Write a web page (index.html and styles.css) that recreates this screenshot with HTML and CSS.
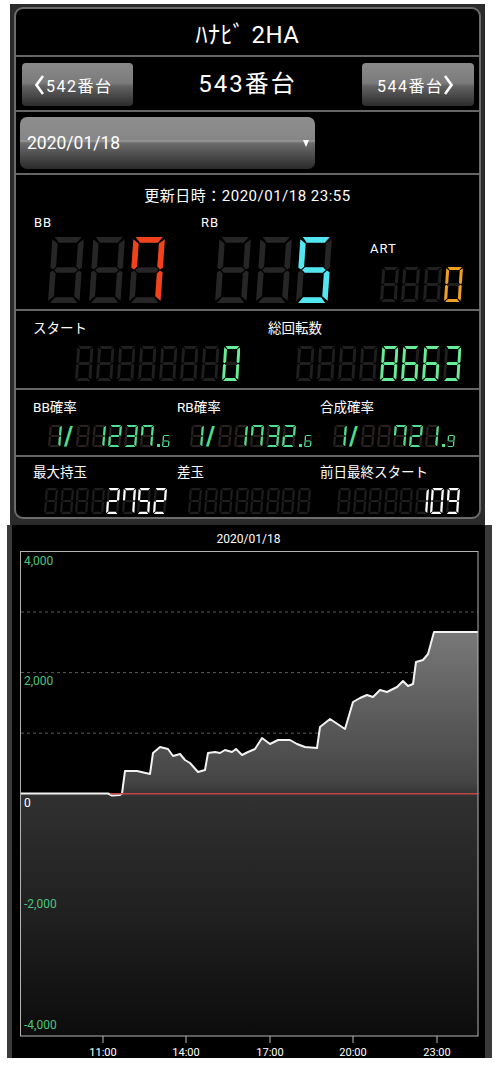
FILE: index.html
```html
<!DOCTYPE html>
<html lang="ja">
<head>
<meta charset="utf-8">
<title>ﾊﾅﾋﾞ 2HA 543番台</title>
<link rel="stylesheet" href="styles.css">
</head>
<body>
<svg class="defs" aria-hidden="true">
  <defs>
    <polygon id="sa" points="2,0 26,0 22,5 6,5"/>
    <polygon id="sb" points="28,2 28,27 25.5,28.5 23,26 23,6"/>
    <polygon id="sc" points="28,31 28,56 23,52 23,32 25.5,29.5"/>
    <polygon id="sd" points="6,53 22,53 26,58 2,58"/>
    <polygon id="se" points="0,31 2.5,29.5 5,32 5,52 0,56"/>
    <polygon id="sf" points="0,2 5,6 5,26 2.5,28.5 0,27"/>
    <polygon id="sg" points="3.5,29 6,26.5 22,26.5 24.5,29 22,31.5 6,31.5"/>
  </defs>
  <symbol id="d8" viewBox="0 0 32 58" preserveAspectRatio="none"><g transform="translate(4 0) skewX(-4)"><use href="#sa"/><use href="#sb"/><use href="#sc"/><use href="#sd"/><use href="#se"/><use href="#sf"/><use href="#sg"/></g></symbol>
  <symbol id="n0" viewBox="0 0 32 58" preserveAspectRatio="none"><g transform="translate(4 0) skewX(-4)"><use href="#sa"/><use href="#sb"/><use href="#sc"/><use href="#sd"/><use href="#se"/><use href="#sf"/></g></symbol>
  <symbol id="n1" viewBox="0 0 32 58" preserveAspectRatio="none"><g transform="translate(4 0) skewX(-4)"><use href="#sb"/><use href="#sc"/></g></symbol>
  <symbol id="n2" viewBox="0 0 32 58" preserveAspectRatio="none"><g transform="translate(4 0) skewX(-4)"><use href="#sa"/><use href="#sb"/><use href="#sd"/><use href="#se"/><use href="#sg"/></g></symbol>
  <symbol id="n3" viewBox="0 0 32 58" preserveAspectRatio="none"><g transform="translate(4 0) skewX(-4)"><use href="#sa"/><use href="#sb"/><use href="#sc"/><use href="#sd"/><use href="#sg"/></g></symbol>
  <symbol id="n5" viewBox="0 0 32 58" preserveAspectRatio="none"><g transform="translate(4 0) skewX(-4)"><use href="#sa"/><use href="#sc"/><use href="#sd"/><use href="#sf"/><use href="#sg"/></g></symbol>
  <symbol id="n6" viewBox="0 0 32 58" preserveAspectRatio="none"><g transform="translate(4 0) skewX(-4)"><use href="#sa"/><use href="#sc"/><use href="#sd"/><use href="#se"/><use href="#sf"/><use href="#sg"/></g></symbol>
  <symbol id="n7" viewBox="0 0 32 58" preserveAspectRatio="none"><g transform="translate(4 0) skewX(-4)"><use href="#sa"/><use href="#sb"/><use href="#sc"/><use href="#sf"/></g></symbol>
  <symbol id="n9" viewBox="0 0 32 58" preserveAspectRatio="none"><g transform="translate(4 0) skewX(-4)"><use href="#sa"/><use href="#sb"/><use href="#sc"/><use href="#sd"/><use href="#sf"/><use href="#sg"/></g></symbol>
</svg>

<div class="top">
  <div class="panel">
    <div class="title">ﾊﾅﾋﾞ 2HA</div>

    <div class="nav">
      <div class="btn prev">
        <svg class="chev" viewBox="0 0 9 20"><polyline points="8,1 1.5,10 8,19"/></svg>542番台
      </div>
      <div class="cur">543番台</div>
      <div class="btn next">
        544番台<svg class="chev" viewBox="0 0 9 20"><polyline points="1,1 7.5,10 1,19"/></svg>
      </div>
    </div>

    <div class="date">
      <div class="select"><span>2020/01/18</span><span class="caret"></span></div>
    </div>

    <div class="info">
      <div class="updated">更新日時：2020/01/18 23:55</div>
      <div class="bonus">
        <div class="bgrp bb">
          <div class="lbl">BB</div>
          <div class="seg s-big red" role="img" aria-label="7">
            <svg class="dg"><use href="#d8"/></svg><svg class="dg"><use href="#d8"/></svg><svg class="dg"><use href="#d8"/><use href="#n7"/></svg>
          </div>
        </div>
        <div class="bgrp rb">
          <div class="lbl">RB</div>
          <div class="seg s-big cyan" role="img" aria-label="5">
            <svg class="dg"><use href="#d8"/></svg><svg class="dg"><use href="#d8"/></svg><svg class="dg"><use href="#d8"/><use href="#n5"/></svg>
          </div>
        </div>
        <div class="bgrp art">
          <div class="lbl">ART</div>
          <div class="seg s-art orange" role="img" aria-label="0">
            <svg class="dg"><use href="#d8"/></svg><svg class="dg"><use href="#d8"/></svg><svg class="dg"><use href="#d8"/></svg><svg class="dg"><use href="#d8"/><use href="#n0"/></svg>
          </div>
        </div>
      </div>
    </div>

    <div class="start">
      <div class="col">
        <div class="lbl">スタート</div>
        <div class="seg s-mid green" role="img" aria-label="0">
          <svg class="dg"><use href="#d8"/></svg><svg class="dg"><use href="#d8"/></svg><svg class="dg"><use href="#d8"/></svg><svg class="dg"><use href="#d8"/></svg><svg class="dg"><use href="#d8"/></svg><svg class="dg"><use href="#d8"/></svg><svg class="dg"><use href="#d8"/></svg><svg class="dg"><use href="#d8"/><use href="#n0"/></svg>
        </div>
      </div>
      <div class="col">
        <div class="lbl">総回転数</div>
        <div class="seg s-mid green" role="img" aria-label="8663">
          <svg class="dg"><use href="#d8"/></svg><svg class="dg"><use href="#d8"/></svg><svg class="dg"><use href="#d8"/></svg><svg class="dg"><use href="#d8"/></svg><svg class="dg"><use href="#d8"/><use href="#d8"/></svg><svg class="dg"><use href="#d8"/><use href="#n6"/></svg><svg class="dg"><use href="#d8"/><use href="#n6"/></svg><svg class="dg"><use href="#d8"/><use href="#n3"/></svg>
        </div>
      </div>
    </div>

    <div class="prob">
      <div class="col">
        <div class="lbl">BB確率</div>
        <div class="seg s-prob pgreen p1" role="img" aria-label="1/1237.6">
          <svg class="dg"><use href="#d8"/><use href="#n1"/></svg><span class="sl">/</span><svg class="dg"><use href="#d8"/></svg><svg class="dg"><use href="#d8"/><use href="#n1"/></svg><svg class="dg"><use href="#d8"/><use href="#n2"/></svg><svg class="dg"><use href="#d8"/><use href="#n3"/></svg><svg class="dg"><use href="#d8"/><use href="#n7"/></svg><span class="dp"></span><svg class="dg sm"><use href="#d8"/><use href="#n6"/></svg>
        </div>
      </div>
      <div class="col">
        <div class="lbl">RB確率</div>
        <div class="seg s-prob pgreen p2" role="img" aria-label="1/1732.6">
          <svg class="dg"><use href="#d8"/><use href="#n1"/></svg><span class="sl">/</span><svg class="dg"><use href="#d8"/></svg><svg class="dg"><use href="#d8"/><use href="#n1"/></svg><svg class="dg"><use href="#d8"/><use href="#n7"/></svg><svg class="dg"><use href="#d8"/><use href="#n3"/></svg><svg class="dg"><use href="#d8"/><use href="#n2"/></svg><span class="dp"></span><svg class="dg sm"><use href="#d8"/><use href="#n6"/></svg>
        </div>
      </div>
      <div class="col">
        <div class="lbl">合成確率</div>
        <div class="seg s-prob pgreen p3" role="img" aria-label="1/721.9">
          <svg class="dg"><use href="#d8"/><use href="#n1"/></svg><span class="sl">/</span><svg class="dg"><use href="#d8"/></svg><svg class="dg"><use href="#d8"/></svg><svg class="dg"><use href="#d8"/><use href="#n7"/></svg><svg class="dg"><use href="#d8"/><use href="#n2"/></svg><svg class="dg"><use href="#d8"/><use href="#n1"/></svg><span class="dp"></span><svg class="dg sm"><use href="#d8"/><use href="#n9"/></svg>
        </div>
      </div>
    </div>

    <div class="max">
      <div class="col">
        <div class="lbl">最大持玉</div>
        <div class="seg s-max white m1" role="img" aria-label="2752">
          <svg class="dg"><use href="#d8"/></svg><svg class="dg"><use href="#d8"/></svg><svg class="dg"><use href="#d8"/></svg><svg class="dg"><use href="#d8"/></svg><svg class="dg"><use href="#d8"/><use href="#n2"/></svg><svg class="dg"><use href="#d8"/><use href="#n7"/></svg><svg class="dg"><use href="#d8"/><use href="#n5"/></svg><svg class="dg"><use href="#d8"/><use href="#n2"/></svg>
        </div>
      </div>
      <div class="col">
        <div class="lbl">差玉</div>
        <div class="seg s-max white m2" role="img" aria-label="">
          <svg class="dg"><use href="#d8"/></svg><svg class="dg"><use href="#d8"/></svg><svg class="dg"><use href="#d8"/></svg><svg class="dg"><use href="#d8"/></svg><svg class="dg"><use href="#d8"/></svg><svg class="dg"><use href="#d8"/></svg><svg class="dg"><use href="#d8"/></svg><svg class="dg"><use href="#d8"/></svg>
        </div>
      </div>
      <div class="col">
        <div class="lbl">前日最終スタート</div>
        <div class="seg s-max white m3" role="img" aria-label="109">
          <svg class="dg"><use href="#d8"/></svg><svg class="dg"><use href="#d8"/></svg><svg class="dg"><use href="#d8"/></svg><svg class="dg"><use href="#d8"/></svg><svg class="dg"><use href="#d8"/></svg><svg class="dg"><use href="#d8"/><use href="#n1"/></svg><svg class="dg"><use href="#d8"/><use href="#n0"/></svg><svg class="dg"><use href="#d8"/><use href="#n9"/></svg>
        </div>
      </div>
    </div>
  </div>
</div>

<div class="chart">
  <div class="ctitle">2020/01/18</div>
  <svg class="plot" viewBox="0 0 473 507">
    <defs>
      <linearGradient id="area" gradientUnits="userSpaceOnUse" x1="0" y1="81" x2="0" y2="485">
        <stop offset="0" stop-color="#787878"/>
        <stop offset="0.37" stop-color="#454545"/>
        <stop offset="0.41" stop-color="#303030"/>
        <stop offset="0.7" stop-color="#202020"/>
        <stop offset="1" stop-color="#0c0c0c"/>
      </linearGradient>
    </defs>
    <g class="grid">
      <line x1="9" y1="61" x2="466" y2="61"/>
      <line x1="9" y1="121.6" x2="466" y2="121.6"/>
      <line x1="9" y1="182.2" x2="466" y2="182.2"/>
      <line x1="9" y1="303.3" x2="466" y2="303.3"/>
      <line x1="9" y1="363.9" x2="466" y2="363.9"/>
      <line x1="9" y1="424.4" x2="466" y2="424.4"/>
    </g>
    <path class="area" d="M8.5,485 L8.5,242.5 L96,242.5 L100,244.5 L108,244 L110,242.5 L113,220 L125,220 L138,223 L141,202 L148,196 L156,198 L161,205 L168,203 L173,209 L178,212 L186,221 L193,219 L196,202 L203,201 L208,202 L213,199 L220,201 L224,198 L230,204 L236,201 L243,198 L250,187 L258,193 L266,189 L278,189 L285,193 L293,196 L305,197 L308,176 L318,168 L333,178 L341,151 L348,147 L355,144 L361,146 L368,139 L375,141 L385,136 L391,130 L396,135 L401,133 L404,111 L411,109 L416,103 L422,81 L466,81 L466,485 Z"/>
    <path class="line" d="M8.5,242.5 L96,242.5 L100,244.5 L108,244 L110,242.5 L113,220 L125,220 L138,223 L141,202 L148,196 L156,198 L161,205 L168,203 L173,209 L178,212 L186,221 L193,219 L196,202 L203,201 L208,202 L213,199 L220,201 L224,198 L230,204 L236,201 L243,198 L250,187 L258,193 L266,189 L278,189 L285,193 L293,196 L305,197 L308,176 L318,168 L333,178 L341,151 L348,147 L355,144 L361,146 L368,139 L375,141 L385,136 L391,130 L396,135 L401,133 L404,111 L411,109 L416,103 L422,81 L466,81"/>
    <line class="zero" x1="98" y1="242.75" x2="466" y2="242.75"/>
    <rect class="frame" x="8.5" y="0.5" width="457.5" height="484.5"/>
    <g class="ticks">
      <line x1="91" y1="485" x2="91" y2="492"/>
      <line x1="174" y1="485" x2="174" y2="492"/>
      <line x1="258" y1="485" x2="258" y2="492"/>
      <line x1="341" y1="485" x2="341" y2="492"/>
      <line x1="425" y1="485" x2="425" y2="492"/>
    </g>
    <g class="ylab">
      <text x="12" y="14">4,000</text>
      <text x="12" y="134">2,000</text>
      <text class="z" x="12" y="256">0</text>
      <text x="12" y="357">-2,000</text>
      <text x="12" y="478">-4,000</text>
    </g>
    <g class="xlab">
      <text x="91" y="505">11:00</text>
      <text x="174" y="505">14:00</text>
      <text x="258" y="505">17:00</text>
      <text x="341" y="505">20:00</text>
      <text x="425" y="505">23:00</text>
    </g>
  </svg>
</div>
</body>
</html>
```

FILE: styles.css
```css
* { box-sizing: border-box; }

body {
  margin: 0;
  background: #fff;
  color: #fff;
  font-family: Roboto, "Noto Sans CJK JP", sans-serif;
}

.defs { display: block; width: 0; height: 0; overflow: hidden; }

/* ---------- top panel ---------- */
.top {
  width: 475px;
  margin: 4px 0 0 10px;
  padding: 3px 4px 6px;
  background: #2b2b2b;
}

.panel {
  border: 2px solid #6c6c6c;
  border-radius: 9px;
  background: #000;
  overflow: hidden;
}

.title {
  height: 46px;
  display: flex;
  align-items: center;
  justify-content: center;
  font-size: 24px;
  letter-spacing: 0.5px;
}

.nav {
  height: 55px;
  border-top: 2px solid #666;
  display: flex;
  align-items: flex-start;
  padding: 6px 5px 0 6px;
}

.btn {
  height: 43px;
  border-radius: 4px;
  display: flex;
  align-items: center;
  font-size: 16px;
  letter-spacing: 1.5px;
  background: linear-gradient(to bottom, #8a8a8a 0%, #7b7b7b 46%, #626262 54%, #2c2c2c 100%);
}

.btn.prev { width: 111px; padding-left: 13px; }
.btn.next { width: 112px; padding-left: 15px; }

.chev {
  width: 9px;
  height: 20px;
  fill: none;
  stroke: #fff;
  stroke-width: 2.6;
}
.prev .chev { margin-right: 2px; }
.next .chev { margin-left: 1px; }

.cur {
  flex: 1;
  text-align: center;
  font-size: 24px;
  line-height: 42px;
  letter-spacing: 2px;
}

.date {
  height: 63px;
  border-top: 2px solid #666;
  padding: 5px 0 0 4px;
}

.select {
  width: 295px;
  height: 52px;
  border-radius: 7px;
  display: flex;
  align-items: center;
  justify-content: space-between;
  padding: 0 6px 0 7px;
  font-size: 17.5px;
  background: linear-gradient(to bottom, #8e8e8e 0%, #868686 44%, #9c9c9c 46%, #6c6c6c 50%, #2a2a2a 100%);
}

.caret {
  width: 0;
  height: 0;
  border-left: 3.5px solid transparent;
  border-right: 3.5px solid transparent;
  border-top: 7px solid #fff;
}

.info {
  height: 136px;
  border-top: 2px solid #666;
  padding-top: 11px;
}

.updated {
  text-align: center;
  font-size: 15px;
  line-height: 20px;
  letter-spacing: 0.5px;
}

.lbl {
  font-size: 13.5px;
  line-height: 14px;
  white-space: nowrap;
}

.bonus {
  display: flex;
  align-items: flex-end;
  padding-left: 18px;
  margin-top: 10px;
}
.bgrp .lbl { font-size: 13px; letter-spacing: 1px; }
.bb .seg { margin: 7px 0 0 14px; }
.rb { margin-left: 36px; }
.rb .seg { margin: 7px 0 0 14px; }
.art { margin-left: 38px; }
.art .seg { margin: 11px 0 1px 10px; }

.start {
  height: 79px;
  border-top: 2px solid #666;
  padding: 10px 0 0 17px;
  display: grid;
  grid-template-columns: 207px 193px;
  column-gap: 28px;
}

.col { display: flex; flex-direction: column; }
.start .seg { align-self: flex-end; margin-top: 11px; }

.prob {
  height: 67px;
  border-top: 2px solid #666;
  padding: 10px 0 0 17px;
  display: grid;
  grid-template-columns: 144px 143px 1fr;
}
.prob .seg { margin-top: 11px; }
.p1 { margin-left: 15px; }
.p2, .p3 { margin-left: 13px; }

.max {
  height: 62px;
  border-top: 2px solid #666;
  padding: 8px 0 0 17px;
  display: grid;
  grid-template-columns: 144px 143px 1fr;
}
.max .seg { margin-top: 9px; }
.m1, .m2 { margin-left: 11px; }
.m3 { margin-left: 17px; }

/* ---------- seven segment displays ---------- */
.seg {
  display: flex;
  align-items: flex-end;
  --dim: #262626;
}
.dg { display: block; flex: none; }
.dg use { fill: var(--dim); }
.dg use + use { fill: currentColor; }

.s-big { gap: 4.5px; }
.s-big .dg { width: 36px; height: 66px; }

.s-art { gap: 2.3px; --dim: #202020; }
.s-art .dg { width: 19px; height: 35px; }

.s-mid { gap: 2.5px; --dim: #1f1f1f; }
.s-mid .dg { width: 18.5px; height: 35px; }

.s-prob { gap: 2px; --dim: #2a2121; }
.s-prob .dg { width: 14px; height: 22px; }
.s-prob .dg.sm { width: 8px; height: 12px; }

.s-max { gap: 1.5px; --dim: #1e1e1e; }
.s-max .dg { width: 14px; height: 26px; }

.sl {
  font-family: "DejaVu Sans", sans-serif;
  font-weight: bold;
  font-size: 24px;
  line-height: 22px;
  height: 22px;
  margin: 0 1px 0 0;
}

.dp {
  width: 3px;
  height: 3px;
  background: currentColor;
  margin: 0 0 0 1px;
}

.red { color: #f2421c; }
.cyan { color: #52e6f0; }
.orange { color: #f0a020; }
.green { color: #66ee96; }
.pgreen { color: #4fe08c; }
.white { color: #fff; }

/* ---------- chart ---------- */
.chart {
  width: 485px;
  height: 533px;
  margin-left: 7px;
  border-left: 5px solid #3a3a3a;
  border-right: 7px solid #3a3a3a;
  background: #000;
}

.ctitle {
  height: 26px;
  line-height: 28px;
  text-align: center;
  font-size: 12px;
}

.plot { display: block; width: 473px; height: 507px; }

.grid line {
  stroke: #5a5a5a;
  stroke-width: 1;
  stroke-dasharray: 3 3;
}

.area { fill: url(#area); }

.line {
  fill: none;
  stroke: #f2f2f2;
  stroke-width: 2;
  stroke-linejoin: round;
}

.zero { stroke: #c04646; stroke-width: 1.5; }

.frame { fill: none; stroke: #b4b4b4; stroke-width: 1; }

.ticks line { stroke: #bbb; stroke-width: 1; }

.ylab text {
  font-family: Roboto, sans-serif;
  font-size: 12px;
  fill: #4cc47e;
}
.ylab text.z { fill: #fff; }

.xlab text {
  font-family: Roboto, sans-serif;
  font-size: 11px;
  fill: #fff;
  text-anchor: middle;
}
```
